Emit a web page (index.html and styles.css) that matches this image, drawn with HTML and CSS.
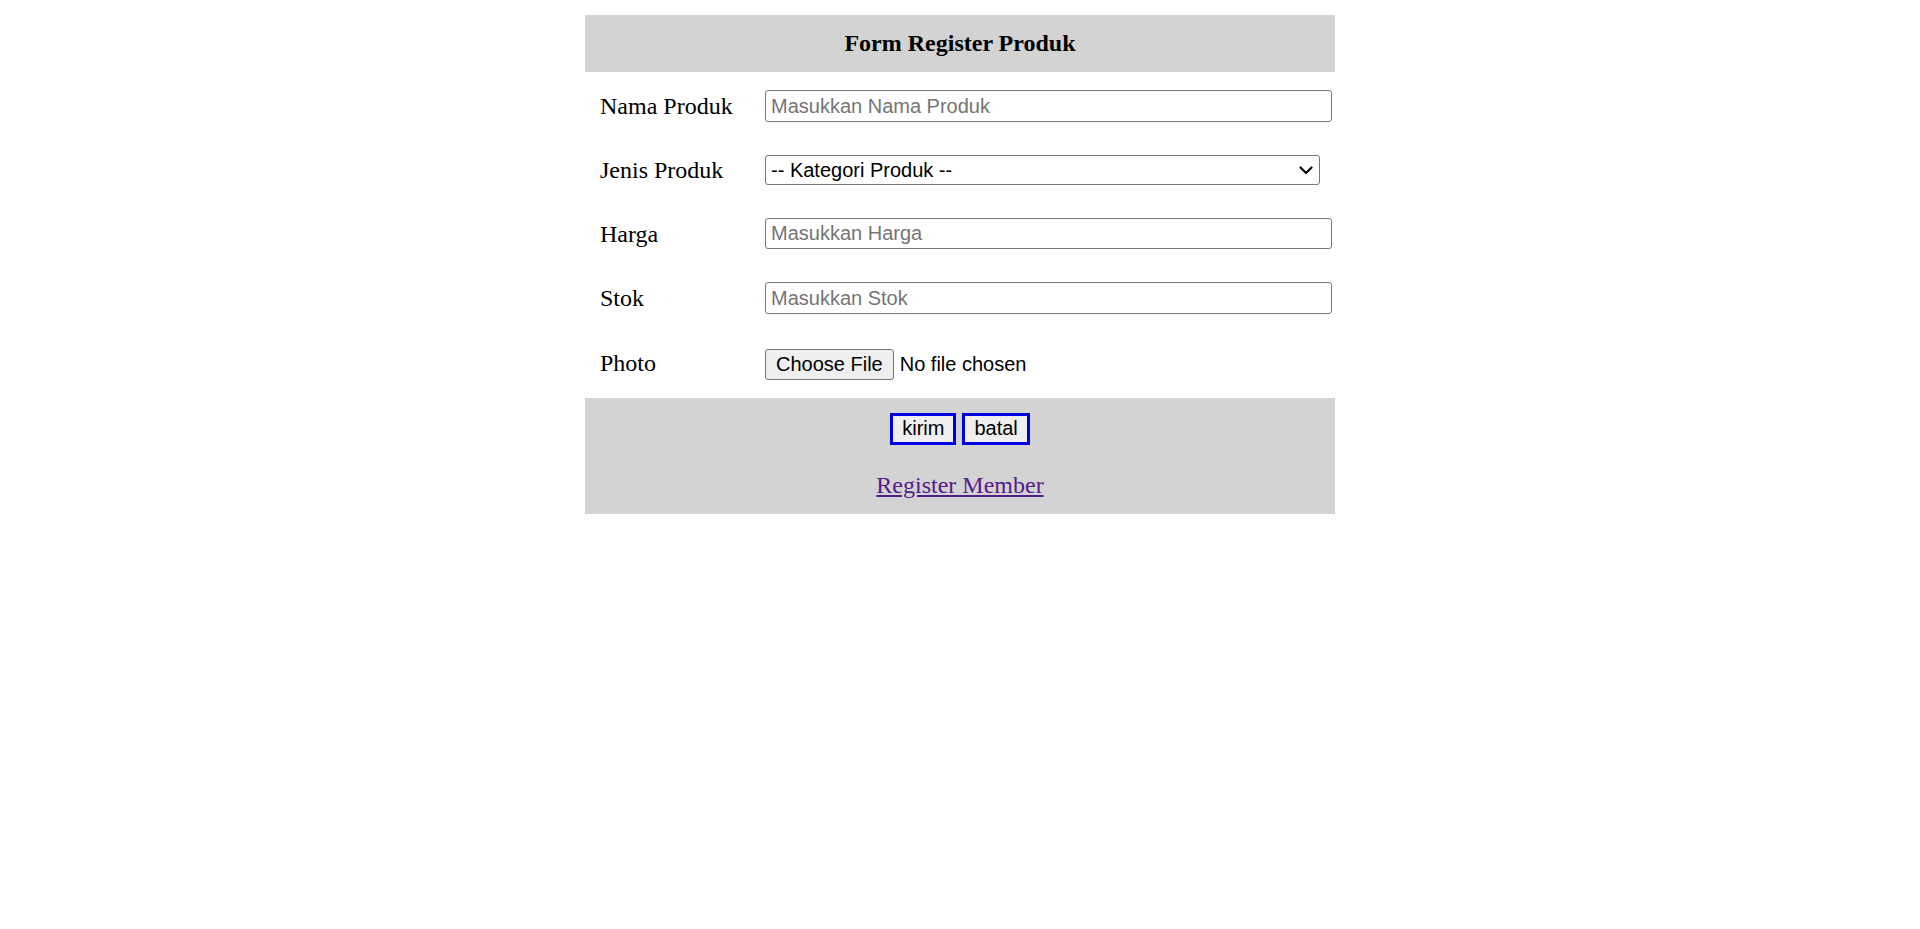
FILE: index.html
```html
<!DOCTYPE html>
<html lang="id">
<head>
<meta charset="utf-8">
<title>Form Register Produk</title>
<link rel="stylesheet" href="styles.css">
</head>
<body>
<form class="card">
  <div class="card-head">Form Register Produk</div>
  <div class="row">
    <label class="label" for="nama">Nama Produk</label>
    <div class="field"><input class="text-input" id="nama" type="text" placeholder="Masukkan Nama Produk"></div>
  </div>
  <div class="row">
    <label class="label" for="jenis">Jenis Produk</label>
    <div class="field">
      <span class="select-wrap">
        <select class="select-input" id="jenis">
          <option>-- Kategori Produk --</option>
        </select>
        <svg class="chevron" width="14" height="9" viewBox="0 0 14 9" aria-hidden="true">
          <path d="M1.5 1.5 L7 7 L12.5 1.5" fill="none" stroke="#000" stroke-width="2.2" stroke-linecap="round" stroke-linejoin="round"/>
        </svg>
      </span>
    </div>
  </div>
  <div class="row">
    <label class="label" for="harga">Harga</label>
    <div class="field"><input class="text-input" id="harga" type="text" placeholder="Masukkan Harga"></div>
  </div>
  <div class="row">
    <label class="label" for="stok">Stok</label>
    <div class="field"><input class="text-input" id="stok" type="text" placeholder="Masukkan Stok"></div>
  </div>
  <div class="row">
    <label class="label" for="photo">Photo</label>
    <div class="field"><input class="file-input" id="photo" type="file"></div>
  </div>
  <div class="card-foot">
    <div class="actions">
      <button class="btn" type="submit">kirim</button>
      <button class="btn" type="reset">batal</button>
    </div>
    <div class="link-row"><a class="member-link" href="#">Register Member</a></div>
  </div>
</form>
</body>
</html>
```

FILE: styles.css
```css
html, body {
  margin: 0;
  padding: 0;
  background: #ffffff;
}

body {
  padding-top: 15px;
  font-family: "Liberation Serif", "Times New Roman", serif;
  font-size: 24px;
  color: #000000;
}

.card {
  width: 750px;
  margin: 0 auto;
  display: flex;
  flex-direction: column;
  gap: 3px;
}

.card-head {
  background: #d3d3d3;
  padding: 15px;
  text-align: center;
  font-weight: bold;
  font-size: 24px;
  line-height: 27px;
}

.row {
  display: grid;
  grid-template-columns: 162px 1fr;
  column-gap: 3px;
  align-items: center;
}

.label {
  padding: 16px 15px 14px;
  font-size: 24px;
  line-height: 27.5px;
  white-space: nowrap;
}

.field {
  padding: 15px;
  display: flex;
  align-items: center;
}

.text-input {
  box-sizing: border-box;
  width: calc(100% + 12px);
  flex: none;
  height: 31.5px;
  margin: 0;
  padding: 1px 5px 0;
  border: 1px solid #767676;
  border-radius: 3px;
  background: #ffffff;
  font-family: "Liberation Sans", Arial, sans-serif;
  font-size: 20px;
  color: #000000;
}

.text-input::placeholder {
  color: #757575;
}

.select-wrap {
  position: relative;
  display: block;
  width: 100%;
}

.select-input {
  box-sizing: border-box;
  display: block;
  width: 100%;
  height: 30px;
  margin: 0;
  padding: 0 30px 0 5px;
  border: 1px solid #767676;
  border-radius: 3px;
  background: #ffffff;
  font-family: "Liberation Sans", Arial, sans-serif;
  font-size: 20px;
  color: #000000;
  appearance: none;
  -webkit-appearance: none;
}

.chevron {
  position: absolute;
  right: 7px;
  top: 11px;
  pointer-events: none;
}

.file-input {
  margin: 2px 0 0;
  font-family: "Liberation Sans", Arial, sans-serif;
  font-size: 20px;
  color: #000000;
}

.file-input::file-selector-button {
  height: 31px;
  margin: 0 6px 0 0;
  padding: 0 10px;
  border: 1px solid #767676;
  border-radius: 3px;
  background: #efefef;
  font-family: "Liberation Sans", Arial, sans-serif;
  font-size: 20px;
  color: #000000;
}

.card-foot {
  background: #d3d3d3;
  padding: 15px;
  text-align: center;
}

.actions {
  display: flex;
  justify-content: center;
  gap: 6px;
  height: 32px;
}

.btn {
  box-sizing: border-box;
  height: 32px;
  margin: 0;
  padding: 0 9px;
  border: 3px solid #0000e0;
  border-radius: 0;
  background: #efefef;
  font-family: "Liberation Sans", Arial, sans-serif;
  font-size: 20px;
  line-height: 23px;
  color: #000000;
}

.link-row {
  margin-top: 27px;
  line-height: 27px;
  font-size: 24px;
}

.member-link {
  color: #551a8b;
  text-decoration: underline;
}
```
